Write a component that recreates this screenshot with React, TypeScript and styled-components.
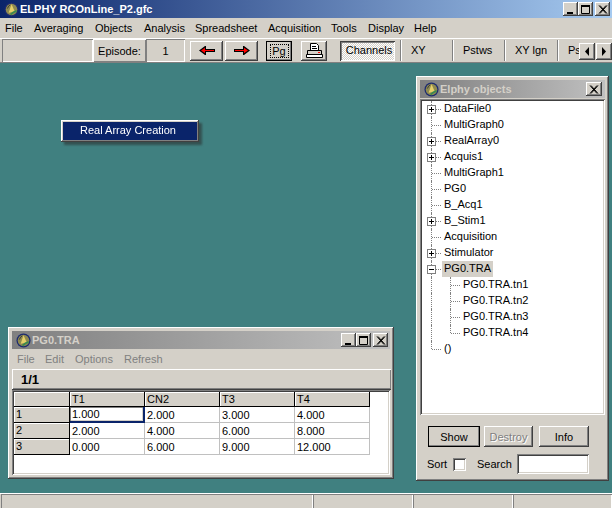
import React from "react";
import styled, { createGlobalStyle, css } from "styled-components";

const Global = createGlobalStyle`
  html, body { margin: 0; padding: 0; width: 612px; height: 508px; overflow: hidden; }
  body { font-family: "Liberation Sans", Arial, sans-serif; font-size: 11px; color: #000; background: #408080; }
  * { box-sizing: border-box; }
`;

const raised = css`
  background: #d4d0c8;
  box-shadow: inset -1px -1px #404040, inset 1px 1px #fff, inset -2px -2px #808080, inset 2px 2px #d4d0c8;
`;
const sunken = css`
  box-shadow: inset 1px 1px #808080, inset -1px -1px #fff, inset 2px 2px #404040, inset -2px -2px #d4d0c8;
`;

const Page = styled.div`
  width: 612px; height: 508px; display: flex; flex-direction: column; background: #408080;
`;
const TitleBar = styled.div<{ $inactive?: boolean }>`
  height: 18px; flex: none; display: flex; align-items: center; padding: 0 2px 0 4px;
  background: ${p => p.$inactive ? "linear-gradient(90deg,#808080,#c0c0c0)" : "linear-gradient(90deg,#0a246a,#a6caf0)"};
`;
const TitleText = styled.div<{ $inactive?: boolean }>`
  flex: 1; font-weight: bold; font-size: 11px; white-space: nowrap; overflow: hidden; padding-left: 1px;
  color: ${p => p.$inactive ? "#d4d0c8" : "#fff"};
`;
const CapButton = styled.button<{ $gap?: number; $solo?: boolean }>`
  ${raised}; width: ${p => p.$solo ? 16 : 15}px; height: 14px; padding: 0; border: 0; flex: none; display: flex; align-items: center; justify-content: center;
  margin-left: ${p => p.$gap ?? 0}px; margin-right: ${p => p.$solo ? 1 : 0}px;
`;
const Glyph = styled.svg`display: block;`;

const MenuBar = styled.div`
  height: 20px; flex: none; display: flex; align-items: center; background: #d4d0c8; padding-left: 5px;
`;
const MenuItem = styled.span<{ $w: number; $dim?: boolean }>`
  width: ${p => p.$w}px; flex: none; font-size: 11px; white-space: nowrap; color: ${p => p.$dim ? "#808080" : "#000"};
`;

const ToolBar = styled.div`
  height: 25px; flex: none; display: flex; align-items: center; background: #d4d0c8; overflow: hidden;
  border-top: 1px solid #fff; border-bottom: 1px solid #808080; padding-left: 2px; position: relative;
`;
const FlatPanel = styled.div<{ $w: number; $mode: "in" | "out" }>`
  width: ${p => p.$w}px; height: 23px; flex: none; display: flex; align-items: center; justify-content: center; font-size: 11px; padding-top: 1px;
  box-shadow: ${p => p.$mode === "in" ? "inset 1px 1px #808080, inset -1px -1px #fff" : "inset 1px 1px #fff, inset -1px -1px #808080"};
`;
const ToolButton = styled.button<{ $w: number; $ml: number; $focus?: boolean }>`
  ${raised}; width: ${p => p.$w}px; height: 20px; margin-left: ${p => p.$ml}px; padding: 0; border: 0; flex: none; font: 11px "Liberation Sans", Arial, sans-serif; color: #000;
  display: flex; align-items: center; justify-content: center; position: relative;
  ${p => p.$focus && css`outline: 1px solid #000; outline-offset: -1px;`}
`;
const DotFrame = styled.span`
  border: 1px dotted #000; width: 19px; height: 14px; display: flex; align-items: center; justify-content: center;
`;
const Checked = styled.div`
  width: 55px; height: 20px; margin-left: 13px; flex: none; display: flex; align-items: center; justify-content: center; padding: 0 0 1px 3px; font-size: 11px;
  background: repeating-conic-gradient(#fff 0 25%, #d4d0c8 0 50%) 0 0 / 2px 2px;
  box-shadow: inset 1px 1px #404040, inset -1px -1px #fff, inset 2px 2px #808080;
`;
const Tab = styled.div<{ $ml: number; $w: number }>`
  margin-left: ${p => p.$ml}px; width: ${p => p.$w}px; height: 21px; flex: none; display: flex; align-items: center; padding: 0 0 2px 10px; font-size: 11px; white-space: nowrap;
  border-left: 1px solid #808080; box-shadow: inset 1px 0 #fff;
`;
const ScrollButtons = styled.div`
  position: absolute; right: 0; top: 4px; display: flex; gap: 1px;
`;
const ScrollButton = styled.button`
  ${raised}; width: 16px; height: 17px; padding: 0; border: 0; display: flex; align-items: center; justify-content: center;
`;

const Desktop = styled.div`
  flex: 1; position: relative; background: #408080;
`;
const Win = styled.div<{ $x: number; $y: number; $w: number; $h: number }>`
  ${raised}; position: absolute; left: ${p => p.$x}px; top: ${p => p.$y}px; width: ${p => p.$w}px; height: ${p => p.$h}px;
  padding: 4px; display: flex; flex-direction: column;
`;
const PopupMenu = styled.div`
  ${raised}; position: absolute; left: 61px; top: 57px; width: 138px; height: 22px; padding: 2px;
  filter: drop-shadow(3px 3px 1px rgba(40,40,40,.55));
`;
const PopupItem = styled.div`
  background: #0a246a; color: #fff; height: 18px; line-height: 17px; padding-left: 17px; font-size: 11px;
`;

const SubMenu = styled.div`
  height: 18px; flex: none; display: flex; align-items: center; padding: 1px 0 0 5px;
`;
const InfoPanel = styled.div`
  height: 21px; flex: none; font-weight: bold; font-size: 13px; padding: 3px 0 0 9px; margin: 2px -1px 0 0;
  box-shadow: inset 1px 1px #fff, inset -1px -1px #808080;
  border-bottom: 1px solid #404040;
`;
const GridArea = styled.div`
  flex: 1; background: #fff; ${sunken}; padding: 2px;
`;
const Grid = styled.div`
  display: grid; grid-template-columns: 56px repeat(4, 75px); grid-template-rows: 15px; grid-auto-rows: 16px; width: 356px;
`;
const HeadCell = styled.div`
  background: #d4d0c8; font-size: 11px; line-height: 15px; padding-left: 2px;
  border-right: 1px solid #000; border-bottom: 1px solid #000;
  box-shadow: inset 1px 1px #fff;
`;
const Cell = styled.div<{ $focus?: boolean }>`
  font-size: 11px; line-height: 16px; padding-left: 2px; border-right: 1px solid #c0c0c0; border-bottom: 1px solid #c0c0c0; position: relative;
  ${p => p.$focus && css`border-right: 2px solid #0a246a; border-bottom: 2px solid #0a246a;`}
`;
const Editor = styled.div`
  position: absolute; left: 0; top: 0; width: 73px; height: 14px; padding-left: 2px; line-height: 15px; background: #fff;
  box-shadow: inset 1px 1px #808080, inset -1px -1px #d4d0c8; 
`;

const TreeBox = styled.div`
  flex: 1; background: #fff; ${sunken}; padding: 2px 2px 0 3px; margin-top: 1px; overflow: hidden;
`;
const TreeRow = styled.div`
  height: 16px; display: flex; align-items: center; font-size: 11px; white-space: nowrap;
`;
const Connector = styled.span<{ $last?: boolean }>`
  position: relative; width: 19px; height: 16px; flex: none;
  &::before { content: ""; position: absolute; left: 8px; top: 0; bottom: ${p => p.$last ? "8px" : 0}; border-left: 1px dotted #808080; }
  &::after { content: ""; position: absolute; left: 9px; top: 8px; width: 9px; border-top: 1px dotted #808080; }
`;
const Pass = styled.span`
  position: relative; width: 19px; height: 16px; flex: none;
  &::before { content: ""; position: absolute; left: 8px; top: 0; bottom: 0; border-left: 1px dotted #808080; }
`;
const Expander = styled.span`
  position: absolute; left: 4px; top: 4px; width: 9px; height: 9px; z-index: 1; background: #fff; border: 1px solid #808080;
  display: flex; align-items: center; justify-content: center;
`;
const Label = styled.span<{ $sel?: boolean }>`
  padding: 0 2px; height: 16px; line-height: 15px; ${p => p.$sel && "background: #d4d0c8;"}
`;

const BottomPanel = styled.div`
  height: 62px; flex: none; padding: 11px 0 0 8px; display: flex; flex-direction: column; gap: 7px;
`;
const ButtonRow = styled.div`
  display: flex; align-items: center;
`;
const PushButton = styled.button<{ $w: number; $ml?: number; $def?: boolean; $off?: boolean }>`
  ${raised}; width: ${p => p.$w}px; height: 21px; margin-left: ${p => p.$ml ?? 0}px; border: 0; padding: 0; font: 11px "Liberation Sans", Arial, sans-serif;
  color: ${p => p.$off ? "#808080" : "#000"};
  ${p => p.$off && "text-shadow: 1px 1px #fff;"}
  ${p => p.$def && css`outline: 1px solid #000; outline-offset: -1px;`}
`;
const FieldText = styled.span<{ $w: number; $ml?: number }>`
  font-size: 11px; width: ${p => p.$w}px; flex: none; margin-left: ${p => p.$ml ?? 0}px;
`;
const Check = styled.div`
  width: 13px; height: 13px; background: #fff; ${sunken}; flex: none;
`;
const SearchBox = styled.div`
  width: 72px; height: 20px; background: #fff; ${sunken}; flex: none;
`;

const StatusBar = styled.div`
  height: 15px; flex: none; display: flex; background: #d4d0c8; border-top: 1px solid #fff; padding-left: 1px;
`;
const StatusCell = styled.div<{ $w: number }>`
  width: ${p => p.$w}px; flex: none; box-shadow: inset 1px 1px #808080, inset -1px 0 #fff;
`;

const AppIcon = () => (
  <Glyph width="15" height="15" viewBox="0 0 16 16">
    <circle cx="8" cy="8" r="7.5" fill="#1c2a70" />
    <circle cx="8" cy="8" r="6.2" fill="#8f8a50" />
    <path d="M8 2.5 L11.5 10 L5 11.5 Z" fill="#e6cf68" />
    <path d="M7 13.5 q3 -3 6.5 -4" stroke="#3a8a50" strokeWidth="2" fill="none" />
    <path d="M3.5 7 q1.5 -3 3 -4" stroke="#333" strokeWidth="1" fill="none" />
  </Glyph>
);
const Min = () => <Glyph width="10" height="9" viewBox="0 0 10 9"><rect x="1" y="7" width="6" height="2" fill="#000" /></Glyph>;
const Max = () => <Glyph width="10" height="9" viewBox="0 0 10 9"><path d="M0.5 1.5H8.5V8.5H0.5Z" fill="none" stroke="#000" /><rect y="0" width="9" height="2" fill="#000" /></Glyph>;
const Close = () => <Glyph width="10" height="9" viewBox="0 0 10 9"><path d="M1 0.5 L8 8.5 M2 0.5 L9 8.5 M8 0.5 L1 8.5 M9 0.5 L2 8.5" stroke="#000" strokeWidth="1" /></Glyph>;

const ArrowLeft = () => <Glyph width="16" height="9" viewBox="0 0 16 9"><path d="M0 4.5 L6 0 H7 V3 H16 V6 H7 V9 H6 Z" fill="#000" /><path d="M2 4.5 L6 1.8 V4 H15 V5 H6 V7.2 Z" fill="#f00" /></Glyph>;
const ArrowRight = () => <Glyph width="16" height="9" viewBox="0 0 16 9"><path d="M16 4.5 L10 0 H9 V3 H0 V6 H9 V9 H10 Z" fill="#000" /><path d="M14 4.5 L10 1.8 V4 H1 V5 H10 V7.2 Z" fill="#f00" /></Glyph>;
const Printer = () => (
  <Glyph width="17" height="15" viewBox="0 0 17 15">
    <path d="M4.5 0.5 H10.5 L12.5 2.5 V7.5 H4.5 Z" fill="#fff" stroke="#000" />
    <path d="M6 3.5H10 M6 5.5H11" stroke="#000" />
    <path d="M1.5 7.5 H15.5 V11.5 H1.5 Z" fill="#d4d0c8" stroke="#000" />
    <rect x="12" y="9" width="2" height="1" fill="#f00" />
    <path d="M0.5 11.5 H16.5 V14.5 H0.5 Z" fill="#fff" stroke="#000" />
  </Glyph>
);
const Tri = ({ right }: { right?: boolean }) => (
  <Glyph width="6" height="9" viewBox="0 0 6 9"><path d={right ? "M1 0 L5 4.5 L1 9 Z" : "M5 0 L1 4.5 L5 9 Z"} fill="#000" /></Glyph>
);
const PlusMinus = ({ minus }: { minus?: boolean }) => (
  <Glyph width="7" height="7" viewBox="0 0 7 7">
    <path d={minus ? "M1 3.5H6" : "M1 3.5H6 M3.5 1V6"} stroke="#000" />
  </Glyph>
);

const menu: [string, number][] = [["File", 29], ["Averaging", 61], ["Objects", 49], ["Analysis", 51], ["Spreadsheet", 73], ["Acquisition", 63], ["Tools", 37], ["Display", 46], ["Help", 40]];

const tree: { t: string; exp?: "+" | "-"; last?: boolean; kid?: boolean; kidLast?: boolean; sel?: boolean }[] = [
  { t: "DataFile0", exp: "+" }, { t: "MultiGraph0" }, { t: "RealArray0", exp: "+" }, { t: "Acquis1", exp: "+" },
  { t: "MultiGraph1" }, { t: "PG0" }, { t: "B_Acq1" }, { t: "B_Stim1", exp: "+" }, { t: "Acquisition" },
  { t: "Stimulator", exp: "+" }, { t: "PG0.TRA", exp: "-", sel: true },
  { t: "PG0.TRA.tn1", kid: true }, { t: "PG0.TRA.tn2", kid: true }, { t: "PG0.TRA.tn3", kid: true }, { t: "PG0.TRA.tn4", kid: true, kidLast: true },
  { t: "()", last: true },
];

const gridRows = [
  ["1", "1.000", "2.000", "3.000", "4.000"],
  ["2", "2.000", "4.000", "6.000", "8.000"],
  ["3", "0.000", "6.000", "9.000", "12.000"],
];

export default function App() {
  return (
    <Page>
      <Global />
      <TitleBar>
        <AppIcon />
        <TitleText>ELPHY RCOnLine_P2.gfc</TitleText>
        <CapButton><Min /></CapButton>
        <CapButton><Max /></CapButton>
        <CapButton $gap={2}><Close /></CapButton>
      </TitleBar>
      <MenuBar>
        {menu.map(([m, w]) => <MenuItem key={m} $w={w}>{m}</MenuItem>)}
      </MenuBar>
      <ToolBar>
        <FlatPanel $w={91} $mode="in" />
        <FlatPanel $w={53} $mode="out">Episode:</FlatPanel>
        <FlatPanel $w={39} $mode="in">1</FlatPanel>
        <ToolButton $w={33} $ml={5}><ArrowLeft /></ToolButton>
        <ToolButton $w={33} $ml={2}><ArrowRight /></ToolButton>
        <ToolButton $w={26} $ml={8} $focus><DotFrame>Pg</DotFrame></ToolButton>
        <ToolButton $w={26} $ml={9}><Printer /></ToolButton>
        <Checked>Channels</Checked>
        <Tab $ml={5} $w={52}>XY</Tab>
        <Tab $ml={0} $w={52}>Pstws</Tab>
        <Tab $ml={0} $w={53}>XY lgn</Tab>
        <Tab $ml={0} $w={30}>Ps</Tab>
        <ScrollButtons>
          <ScrollButton><Tri /></ScrollButton>
          <ScrollButton><Tri right /></ScrollButton>
        </ScrollButtons>
      </ToolBar>
      <Desktop>
        <PopupMenu><PopupItem>Real Array Creation</PopupItem></PopupMenu>
        <Win $x={8} $y={264} $w={386} $h={152}>
          <TitleBar $inactive>
            <AppIcon />
            <TitleText $inactive>PG0.TRA</TitleText>
            <CapButton><Min /></CapButton>
            <CapButton><Max /></CapButton>
            <CapButton $gap={2}><Close /></CapButton>
          </TitleBar>
          <SubMenu>
            {([["File", 28], ["Edit", 30], ["Options", 49], ["Refresh", 50]] as [string, number][]).map(([m, w]) => <MenuItem key={m} $w={w} $dim>{m}</MenuItem>)}
          </SubMenu>
          <InfoPanel>1/1</InfoPanel>
          <GridArea>
            <Grid>
              <HeadCell />
              {["T1", "CN2", "T3", "T4"].map(h => <HeadCell key={h}>{h}</HeadCell>)}
              {gridRows.map((r, i) => r.map((c, j) => j === 0
                ? <HeadCell key={`${i}-${j}`}>{c}</HeadCell>
                : i === 0 && j === 1
                  ? <Cell key={`${i}-${j}`} $focus><Editor>{c}</Editor></Cell>
                  : <Cell key={`${i}-${j}`}>{c}</Cell>))}
            </Grid>
          </GridArea>
        </Win>
        <Win $x={416} $y={13} $w={193} $h={405}>
          <TitleBar $inactive>
            <AppIcon />
            <TitleText $inactive>Elphy objects</TitleText>
            <CapButton $solo><Close /></CapButton>
          </TitleBar>
          <TreeBox>
            {tree.map(n => (
              <TreeRow key={n.t}>
                {n.kid ? <Pass /> : (
                  <Connector $last={n.last}>
                    {n.exp && <Expander><PlusMinus minus={n.exp === "-"} /></Expander>}
                  </Connector>
                )}
                {n.kid && <Connector $last={n.kidLast} />}
                <Label $sel={n.sel}>{n.t}</Label>
              </TreeRow>
            ))}
          </TreeBox>
          <BottomPanel>
            <ButtonRow>
              <PushButton $w={52} $def>Show</PushButton>
              <PushButton $w={49} $ml={4} $off>Destroy</PushButton>
              <PushButton $w={50} $ml={6}>Info</PushButton>
            </ButtonRow>
            <ButtonRow>
              <FieldText $w={26} $ml={-1}>Sort</FieldText>
              <Check />
              <FieldText $w={40} $ml={11}>Search</FieldText>
              <SearchBox />
            </ButtonRow>
          </BottomPanel>
        </Win>
      </Desktop>
      <StatusBar>
        <StatusCell $w={312} />
        <StatusCell $w={100} />
        <StatusCell $w={100} />
        <StatusCell $w={99} />
      </StatusBar>
    </Page>
  );
}
